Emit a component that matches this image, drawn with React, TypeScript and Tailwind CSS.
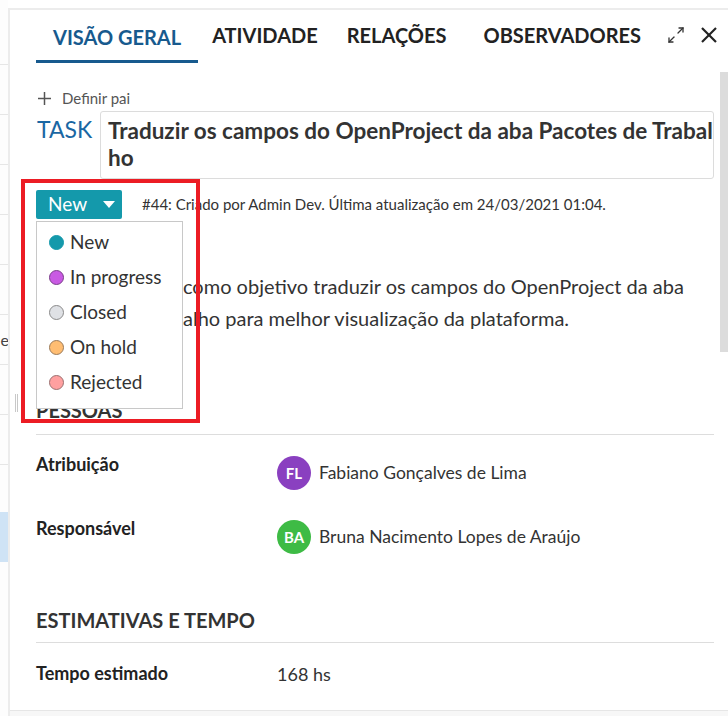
import React from "react";

const statuses = [
  { name: "New", color: "bg-[#1499ab]", border: "border-[#1499ab]" },
  { name: "In progress", color: "bg-[#c95ae3]", border: "border-[#7a3f8a]" },
  { name: "Closed", color: "bg-[#dfe1e5]", border: "border-[#8a8a8a]" },
  { name: "On hold", color: "bg-[#ffbd72]", border: "border-[#9a7a5a]" },
  { name: "Rejected", color: "bg-[#ffa0a0]", border: "border-[#9a7070]" },
];

function ExpandIcon() {
  return (
    <svg width="18" height="18" viewBox="0 0 18 18" fill="none" stroke="#333" strokeWidth="1.3" strokeLinecap="round">
      <path d="M11 7 L16 2" />
      <path d="M12 2 H16 V6" />
      <path d="M2 16 L7 11" />
      <path d="M2 12 V16 H6" />
    </svg>
  );
}

function CloseIcon() {
  return (
    <svg width="16" height="16" viewBox="0 0 16 16" fill="none" stroke="#222" strokeWidth="2.2" strokeLinecap="butt">
      <path d="M1 1 L15 15" />
      <path d="M15 1 L1 15" />
    </svg>
  );
}

export default function App() {
  return (
    <div className="w-[728px] h-[716px] overflow-hidden bg-white flex font-['Lato','Noto_Sans',sans-serif] text-[#333] relative">
      {/* left background strip */}
      <div className="w-[8px] shrink-0 flex flex-col bg-[#fdfdfd]">
        <div className="h-[64px] shrink-0" />
        {Array.from({ length: 5 }).map((_, i) => (
          <div key={i} className="h-[50px] shrink-0 border-t border-[#e6e6e6]" />
        ))}
        <div className="h-[50px] shrink-0 border-t border-[#e6e6e6] flex items-center justify-end overflow-hidden">
          <span className="text-[16px] leading-none text-[#444] mr-[-1px]">e</span>
        </div>
        <div className="h-[50px] shrink-0 border-t border-[#e6e6e6]" />
        <div className="h-[50px] shrink-0 border-t border-[#e6e6e6]" />
        <div className="h-[48px] shrink-0 border-t border-[#e6e6e6]" />
        <div className="h-[50px] shrink-0 bg-[#cfe3f5]" />
      </div>

      {/* panel */}
      <div className="flex-1 mt-[8px] border-t-2 border-l-2 border-[#ececec] flex flex-col min-w-0">
        {/* tabs */}
        <div className="h-[53px] shrink-0 flex items-stretch pl-[26px] pr-[11px]">
          <div className="px-[17px] flex items-center border-b-[3px] border-[#175a8e] text-[#175a8e] text-[20px] font-bold pt-[3px]">
            VISÃO GERAL
          </div>
          <div className="ml-[14px] flex items-center text-[20px] font-bold text-[#222] pb-[3px]">ATIVIDADE</div>
          <div className="ml-[29px] flex items-center text-[20px] font-bold text-[#222] pb-[3px]">RELAÇÕES</div>
          <div className="ml-[37px] flex items-center text-[20px] font-bold text-[#222] pb-[3px]">OBSERVADORES</div>
          <div className="ml-auto flex items-center gap-[16px] pb-[4px]">
            <ExpandIcon />
            <CloseIcon />
          </div>
        </div>

        {/* body */}
        <div className="flex-1 flex min-h-0">
          <div className="flex-1 pl-[26px] min-w-0 relative">
            {/* definir pai */}
            <div className="mt-[25px] h-[20px] flex items-center text-[15px] text-[#555]">
              <svg width="13" height="13" viewBox="0 0 13 13" className="ml-[2px]" stroke="#555" strokeWidth="1.5">
                <path d="M6.5 0 V13" />
                <path d="M0 6.5 H13" />
              </svg>
              <span className="ml-[11px]">Definir pai</span>
            </div>

            {/* subject */}
            <div className="mt-[3px] flex">
              <div className="w-[64px] shrink-0 pt-[5px] pl-[1px] text-[23px] leading-[27px] text-[#1a67a3]">TASK</div>
              <div className="flex-1 border border-[#dcdcdc] rounded-[3px] pl-[7px] pt-[5px] pb-[7px] text-[22.5px] leading-[27px] font-bold text-[#333] whitespace-nowrap">
                <div>Traduzir os campos do OpenProject da aba Pacotes de Trabal</div>
                <div>ho</div>
              </div>
            </div>

            {/* status row */}
            <div className="mt-[11px] flex items-center">
              <div className="relative">
                <div className="w-[86px] h-[29px] bg-[#1499ab] rounded-[2px] flex items-center pl-[12px] text-white text-[19px]">
                  <span>New</span>
                  <svg width="12" height="7" viewBox="0 0 12 7" className="ml-auto mr-[7px]">
                    <path d="M0 0 H12 L6 7 Z" fill="white" />
                  </svg>
                </div>
                {/* dropdown */}
                <div className="absolute z-20 left-0 top-[31px] w-[147px] bg-white border border-[#c8c8c8] pt-[3px] pb-[8px]">
                  {statuses.map((s) => (
                    <div key={s.name} className="h-[35px] flex items-center pl-[12px]">
                      <span className={`w-[15px] h-[15px] rounded-full border ${s.color} ${s.border}`} />
                      <span className="ml-[6px] text-[19px] text-[#333]">{s.name}</span>
                    </div>
                  ))}
                </div>
              </div>
              <span className="ml-[20px] text-[15px] text-[#333]">
                #44: Criado por Admin Dev. Última atualização em 24/03/2021 01:04.
              </span>
            </div>

            {/* description */}
            <div className="mt-[51px] text-[20px] leading-[32px] text-[#333] whitespace-nowrap">
              <div>
                <span className="inline-block w-[147px] align-top">Esta task tem</span>como objetivo traduzir os campos do OpenProject da aba
              </div>
              <div>
                <span className="inline-block w-[147px] align-top">Pacotes de Trab</span>alho para melhor visualização da plataforma.
              </div>
            </div>

            {/* pessoas */}
            <div className="mt-[64px] pb-[12px] border-b border-[#dddddd] text-[20px] leading-[24px] font-bold text-[#333]">
              PESSOAS
            </div>
            <div className="mt-[19px] flex items-start">
              <div className="w-[241px] shrink-0 text-[18px] leading-[20px] font-bold text-[#222]">Atribuição</div>
              <div className="mt-[2px] flex items-center">
                <div className="w-[34px] h-[34px] rounded-full bg-[#8a40c0] flex items-center justify-center text-white text-[15px] font-bold">FL</div>
                <span className="ml-[8px] text-[17.5px] text-[#333]">Fabiano Gonçalves de Lima</span>
              </div>
            </div>
            <div className="mt-[28px] flex items-start">
              <div className="w-[241px] shrink-0 text-[18px] leading-[20px] font-bold text-[#222]">Responsável</div>
              <div className="mt-[2px] flex items-center">
                <div className="w-[34px] h-[34px] rounded-full bg-[#3ebb45] flex items-center justify-center text-white text-[15px] font-bold">BA</div>
                <span className="ml-[8px] text-[17.5px] text-[#333]">Bruna Nacimento Lopes de Araújo</span>
              </div>
            </div>

            {/* estimativas */}
            <div className="mt-[54px] pb-[10px] border-b border-[#dddddd] text-[20px] leading-[24px] font-bold text-[#333]">
              ESTIMATIVAS E TEMPO
            </div>
            <div className="mt-[18px] flex items-center">
              <div className="w-[241px] shrink-0 text-[18px] leading-[20px] font-bold text-[#222]">Tempo estimado</div>
              <div className="text-[18px] leading-[20px] mt-[3px] text-[#333]">168 hs</div>
            </div>

            {/* annotation red rectangle */}
            <div className="absolute z-30 left-[11px] top-[116px] w-[179px] h-[244px] border-4 border-[#ec1c24] pointer-events-none" />
          </div>

          {/* scrollbar */}
          <div className="w-[14px] shrink-0 pt-[9px] pl-[6px]">
            <div className="w-[8px] h-[280px] bg-[#dcdcdc]" />
          </div>
        </div>

        {/* footer */}
        <div className="h-[6px] shrink-0 border-t border-[#e6e6e6] bg-[#f7f7f7]" />
      </div>

      {/* resize handle */}
      <div className="absolute left-[15px] top-[394px] w-[4px] h-[18px] flex gap-[1px]">
        <div className="w-[1px] h-full bg-[#c8c8c8]" />
        <div className="w-[1px] h-full bg-[#c8c8c8]" />
      </div>
    </div>
  );
}
